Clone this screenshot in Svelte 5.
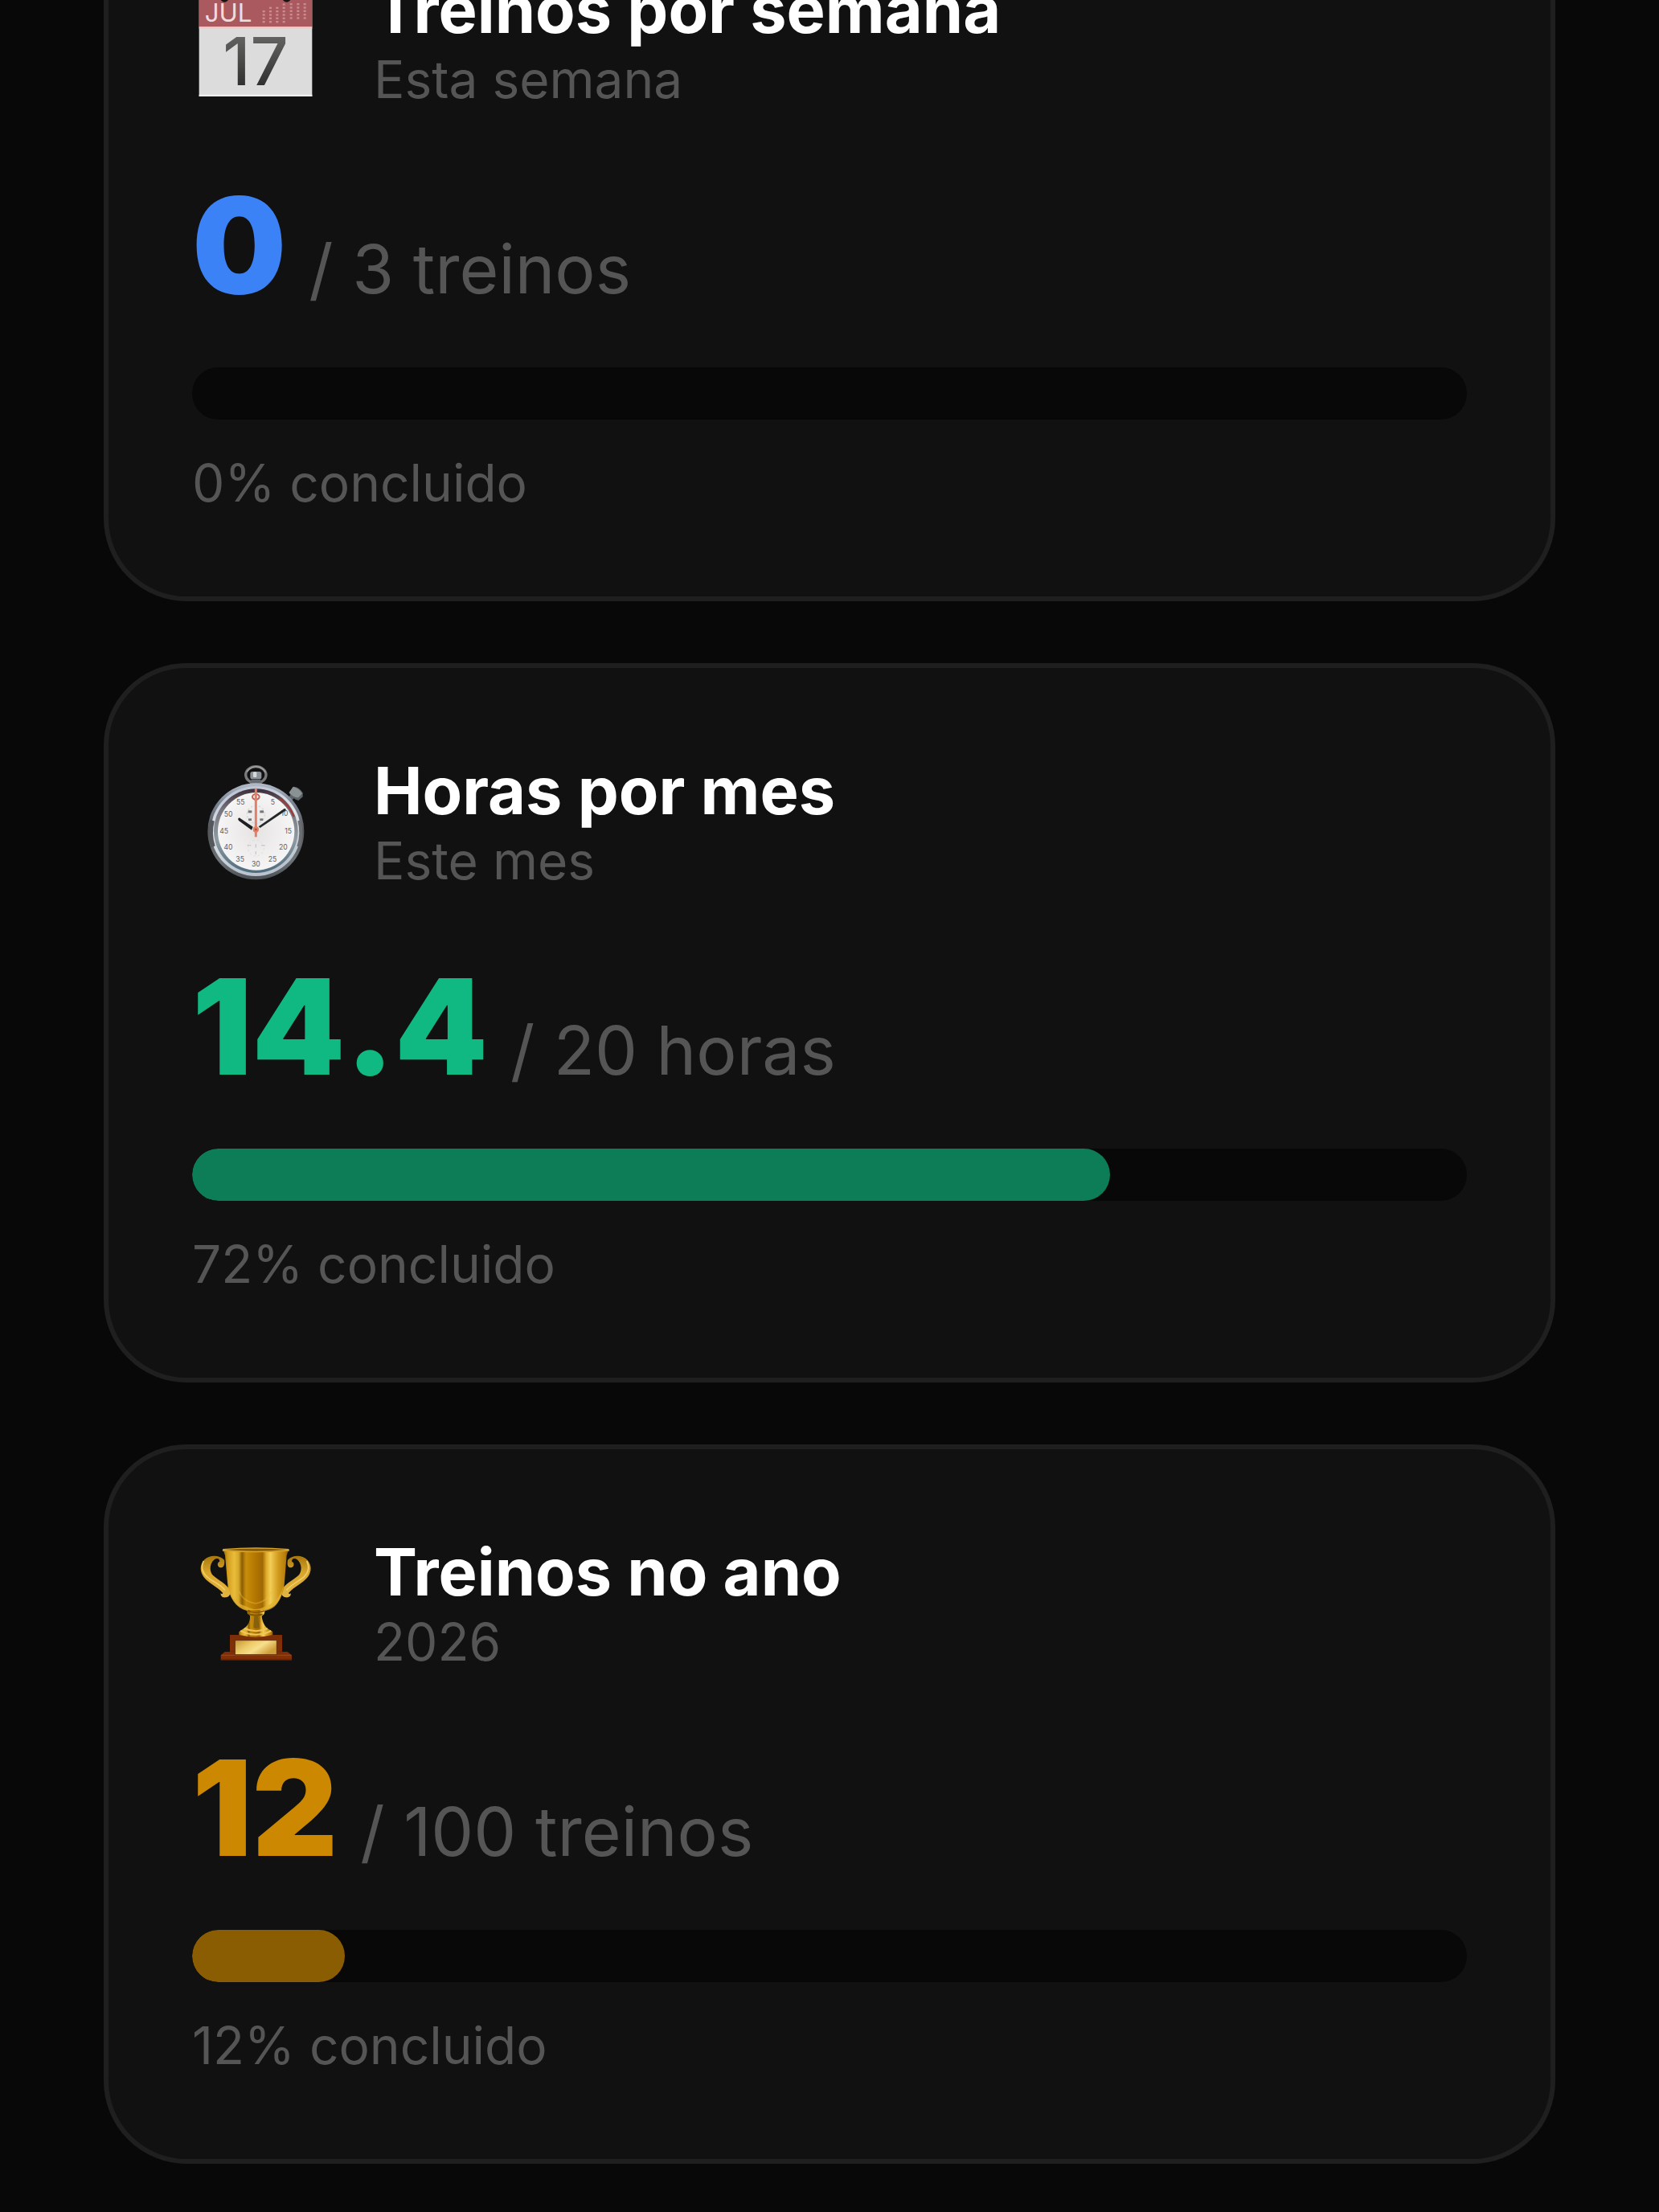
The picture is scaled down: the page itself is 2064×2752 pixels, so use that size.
<script>
  const goals = [
    { icon: 'calendar', title: 'Treinos por semana', period: 'Esta semana', value: 0, target: 3, unit: 'treinos', percent: 0, color: '#3b82f6' },
    { icon: 'stopwatch', title: 'Horas por mes', period: 'Este mes', value: 14.4, target: 20, unit: 'horas', percent: 72, color: '#10b981' },
    { icon: 'trophy', title: 'Treinos no ano', period: '2026', value: 12, target: 100, unit: 'treinos', percent: 12, color: '#cc8800' }
  ];

  // Month overview dots on the calendar header: [x, first row, last row]
  const dotColumns = [[294, 2, 5], [319, 1, 5], [344, 1, 5], [369, 0, 5], [396, 0, 4], [422, 0, 4], [447, 0, 4]];

  const dial = [
    ['5', 328, 214], ['10', 372, 256], ['15', 386, 320], ['20', 367, 380], ['25', 327, 425], ['30', 265, 444],
    ['35', 206, 425], ['40', 162, 380], ['45', 146, 320], ['50', 162, 258], ['55', 208, 214]
  ];
</script>

<main>
  {#each goals as goal}
    <article class="card">
      <header>
        {#if goal.icon === 'calendar'}
          <svg class="icon" viewBox="27 0 474 558" aria-hidden="true">
            <rect x="53" y="72" width="422" height="414" fill="#dcdcdc" />
            <rect x="53" y="72" width="422" height="154" fill="#aa5a5f" />
            <rect x="53" y="226" width="422" height="7" fill="#edc9c7" />
            <rect x="53" y="479" width="422" height="7" fill="#eeeeee" />
            <circle cx="148" cy="118" r="16" fill="#1b1213" />
            <circle cx="380" cy="118" r="16" fill="#1b1213" />
            <text x="74" y="208" font-size="94" font-weight="400" fill="#f1dcdc">JUL</text>
            {#each dotColumns as [x, first, last]}
              {#each Array.from({ length: last - first + 1 }, (_, i) => first + i) as row}
                <rect x={x - 4} y={139 + row * 13 - (x > 380 ? 1 : 0)} width="9" height="7" fill="#c98c8f" />
              {/each}
            {/each}
            <text x="264" y="445" text-anchor="middle" font-size="248" font-weight="500" fill="url(#digits)">17</text>
            <defs>
              <linearGradient id="digits" x1="0" y1="0" x2="0" y2="1">
                <stop offset="0.2" stop-color="#626260" />
                <stop offset="0.8" stop-color="#303030" />
              </linearGradient>
            </defs>
          </svg>
        {:else if goal.icon === 'stopwatch'}
          <svg class="icon" viewBox="27 0 474 558" aria-hidden="true">
            <defs>
              <linearGradient id="rim" x1="0" y1="0" x2="0" y2="1">
                <stop offset="0" stop-color="#b4bcca" />
                <stop offset="0.2" stop-color="#7c8594" />
                <stop offset="0.5" stop-color="#55585c" />
                <stop offset="0.8" stop-color="#6d7378" />
                <stop offset="1" stop-color="#4c5054" />
              </linearGradient>
              <linearGradient id="bezel" x1="0" y1="0" x2="0.3" y2="1">
                <stop offset="0" stop-color="#aebbd0" />
                <stop offset="0.5" stop-color="#e3e5e8" />
                <stop offset="1" stop-color="#b9c4ce" />
              </linearGradient>
              <linearGradient id="lip" x1="0" y1="0" x2="0" y2="1">
                <stop offset="0" stop-color="#3c2e38" />
                <stop offset="0.25" stop-color="#77747c" />
                <stop offset="0.6" stop-color="#8f9ba2" />
                <stop offset="1" stop-color="#4f6b7c" />
              </linearGradient>
              <radialGradient id="face">
                <stop offset="0" stop-color="#e6e4e3" />
                <stop offset="1" stop-color="#f6f5f5" />
              </radialGradient>
            </defs>
            <path d="M390 194 L410 174" stroke="#59636a" stroke-width="18" />
            <path d="M389 169 L404 146 Q425 145 440 169 L440 184 L424 198 Q403 194 389 169Z" fill="#5c6468" />
            <path d="M389 168 L404 147 Q424 150 438 172 L424 187 Q404 187 389 168Z" fill="#8b9294" />
            <ellipse cx="265" cy="102" rx="38" ry="31" fill="none" stroke="#77797a" stroke-width="10" />
            <path d="M231 91 Q245 71 267 71 Q291 73 301 94" fill="none" stroke="#a5a7a8" stroke-width="4" />
            <rect x="244" y="90" width="42" height="28" rx="8" fill="#8d9398" />
            <rect x="255" y="91" width="13" height="20" rx="4" fill="#d4d9dd" />
            <path d="M248 119 H282 L290 142 H240Z" fill="#676b70" />
            <circle cx="265" cy="313" r="180" fill="url(#rim)" />
            <circle cx="265" cy="312" r="168" fill="url(#bezel)" />
            <path d="M105 370 A170 170 0 0 1 102 272" fill="none" stroke="#55585c" stroke-width="17" />
            <path d="M427 272 A170 170 0 0 1 424 370" fill="none" stroke="#6b6d70" stroke-width="12" />
            <circle cx="265" cy="311" r="157" fill="url(#lip)" />
            <path d="M354 190 Q391 216 407 258" fill="none" stroke="#9e3c3c" stroke-width="7" />
            <ellipse cx="266" cy="313" rx="143" ry="145" fill="url(#face)" />
            <circle cx="265" cy="250" r="33" fill="none" stroke="#d0d7da" stroke-width="4" stroke-dasharray="7 8" />
            <circle cx="265" cy="375" r="30" fill="none" stroke="#dfdfe2" stroke-width="3" stroke-dasharray="8 8" />
            <g fill="#606064" font-size="26" text-anchor="middle">
              {#each dial as [label, x, y]}
                <text {x} {y}>{label}</text>
              {/each}
            </g>
            <g fill="#77777a">
              <rect x="236" y="235" width="14" height="9" />
              <rect x="280" y="235" width="14" height="9" />
              <rect x="237" y="265" width="12" height="8" />
              <rect x="280" y="265" width="12" height="8" />
              <path d="M233 365H247M285 365H299M265 361V374M265 388V399" stroke="#c8c8cb" stroke-width="4" />
            </g>
            <ellipse cx="265" cy="184" rx="13" ry="10" fill="none" stroke="#c65d4c" stroke-width="6" />
            <path d="M198 266 L203 262 L254 296 L249 308 L201 273Z" fill="#1d1f22" />
            <path d="M275 295 L372 227 L378 231 L374 237 L281 300Z" fill="#24272a" />
            <path d="M265 152V334" stroke="#e0806a" stroke-width="9" />
            <circle cx="265" cy="306" r="11" fill="#e37d63" />
            <circle cx="265" cy="306" r="4" fill="#b74b36" />
          </svg>
        {:else}
          <svg class="icon" viewBox="27 4 474 558" aria-hidden="true">
            <defs>
              <linearGradient id="cup" x1="0" x2="1">
                <stop offset="0" stop-color="#8d6405" />
                <stop offset="0.07" stop-color="#d29c1b" />
                <stop offset="0.17" stop-color="#e9bd3c" />
                <stop offset="0.24" stop-color="#d7a62a" />
                <stop offset="0.29" stop-color="#8a5d04" />
                <stop offset="0.35" stop-color="#c88d0b" />
                <stop offset="0.5" stop-color="#b27500" />
                <stop offset="0.6" stop-color="#a06805" />
                <stop offset="0.66" stop-color="#e0ac2a" />
                <stop offset="0.72" stop-color="#f2ce56" />
                <stop offset="0.84" stop-color="#d09a1d" />
                <stop offset="0.94" stop-color="#b87f0b" />
                <stop offset="1" stop-color="#805603" />
              </linearGradient>
              <linearGradient id="handle" x1="0" y1="0" x2="0" y2="1">
                <stop offset="0" stop-color="#a6760e" />
                <stop offset="0.4" stop-color="#d9a52b" />
                <stop offset="1" stop-color="#e3b544" />
              </linearGradient>
              <linearGradient id="wood" x1="0" y1="0" x2="0" y2="1">
                <stop offset="0" stop-color="#7c2e08" />
                <stop offset="0.75" stop-color="#833007" />
                <stop offset="1" stop-color="#601d03" />
              </linearGradient>
              <linearGradient id="plate" x1="0" y1="0" x2="1" y2="0.5">
                <stop offset="0" stop-color="#c39435" />
                <stop offset="0.4" stop-color="#edcb68" />
                <stop offset="0.65" stop-color="#f7df8c" />
                <stop offset="1" stop-color="#cf9d39" />
              </linearGradient>
            </defs>
            <g fill="url(#handle)">
              <path d="M147 120 C127 99 91 101 72 120 C55 139 55 163 71 185 C88 207 120 219 142 244 C140 249 136 248 134 244 C132 255 141 262 153 260 C170 258 174 240 162 224 C144 203 119 191 105 178 C90 164 92 133 110 119 C122 110 130 117 130 126 C119 130 120 146 132 149 C143 150 150 141 147 120Z" />
              <path d="M384 120 C404 99 438 101 457 120 C474 139 474 163 458 185 C441 207 409 219 387 244 C389 249 393 248 395 244 C397 255 388 262 376 260 C359 258 355 240 367 224 C385 203 410 191 424 178 C439 164 437 133 419 119 C407 110 399 117 399 126 C410 130 409 146 397 149 C386 150 380 141 384 120Z" />
            </g>
            <path d="M70 124 C57 151 70 172 84 184 C102 201 128 208 150 233" fill="none" stroke="#f0ce66" stroke-width="5" />
            <path d="M455 124 C469 151 458 170 445 183 C427 200 402 208 379 233" fill="none" stroke="#f0ce66" stroke-width="5" />
            <path d="M142 80 H388 L380 103 L372 202 C368 259 342 300 298 307 H232 C190 297 165 257 159 204 L150 103Z" fill="url(#cup)" />
            <path d="M160 212 C170 256 194 283 224 292 C242 298 250 304 265 304 C282 304 290 298 310 290 C340 276 362 250 369 207 C362 277 335 305 298 310 H231 C190 299 165 263 160 212Z" fill="#e1b02d" opacity="0.75" />
            <path d="M203 237 C211 263 233 277 265 283 C294 278 313 263 325 237" fill="none" stroke="#eabd39" stroke-width="5" opacity="0.4" />
            <path d="M142 79 Q265 69 388 79 L390 87 Q265 96 140 87Z" fill="#d8a32a" />
            <path d="M149 82 Q265 74 381 82 Q265 92 149 82Z" fill="#835807" />
            <path d="M232 307 H300 L296 322 L287 330 C289 350 297 367 310 377 L328 388 Q330 404 318 409 H211 Q199 403 202 388 L223 374 C238 363 244 347 243 328 L234 321Z" fill="url(#cup)" />
            <path d="M234 310 Q265 322 298 310 M241 323 Q265 330 290 323" fill="none" stroke="#815503" stroke-width="5" />
            <path d="M259 327 L256 372 Q266 380 278 371 L272 327Z" fill="#87600e" />
            <path d="M208 385 Q265 413 322 385 M223 376 Q265 395 308 376" fill="none" stroke="#efc65b" stroke-width="6" />
            <path d="M203 399 Q265 418 327 399 L324 410 H207Z" fill="#b98522" />
            <path d="M168 400 H202 Q265 416 327 400 H363 V474 H168Z" fill="url(#wood)" />
            <path d="M149 463 H383 L399 476 V495 H134 V476Z" fill="url(#wood)" />
            <path d="M136 476 H397" stroke="#9a4413" stroke-width="4" />
            <rect x="187" y="420" width="156" height="54" fill="url(#plate)" stroke="#633006" stroke-width="3" />
          </svg>
        {/if}
        <div class="heading">
          <h2>{goal.title}</h2>
          <p>{goal.period}</p>
        </div>
      </header>

      <div class="amount">
        <strong style:color={goal.color}>{goal.value}</strong>
        <span>/ {goal.target} {goal.unit}</span>
      </div>

      <div class="track" role="progressbar" aria-label={goal.title} aria-valuemin="0" aria-valuemax="100" aria-valuenow={goal.percent}>
        <div class="fill" style:width="{goal.percent}%" style:background="{goal.color}aa"></div>
      </div>
      <p class="status">{goal.percent}% concluido</p>
    </article>
  {/each}
</main>

<style>
  :global(body) {
    background: #080808;
    overflow-x: hidden;
  }

  :global(#app) {
    overflow: hidden;
  }

  main {
    display: flex;
    flex-direction: column;
    gap: 77px;
    margin-top: -147px;
    padding: 0 129px 62px;
    font-family: Inter, 'Liberation Sans', sans-serif;
    font-optical-sizing: none;
    color: #555555;
  }

  .card {
    padding: 99px 104px 101px;
    border: 6px solid #1f1f1f;
    border-radius: 103px;
    background: #111111;
  }

  header {
    display: flex;
    align-items: center;
    gap: 68px;
  }

  .icon {
    flex: none;
    width: 158px;
    height: 186px;
  }

  h2,
  p {
    margin: 0;
  }

  h2 {
    font-size: 81px;
    font-weight: 700;
    line-height: 96px;
    color: #ffffff;
  }

  p {
    font-size: 64px;
    line-height: 78px;
  }

  .amount {
    display: flex;
    align-items: baseline;
    gap: 28px;
    margin-top: 79px;
  }

  strong {
    font-size: 165px;
    font-weight: 900;
    font-kerning: none;
    line-height: 165px;
  }

  .amount span {
    font-size: 84px;
    line-height: 84px;
  }

  .track {
    height: 65px;
    margin-top: 69px;
    border-radius: 33px;
    background: #080808;
    overflow: hidden;
  }

  .fill {
    height: 100%;
    border-radius: 33px;
  }

  .status {
    margin-top: 39px;
    line-height: 80px;
  }
</style>
